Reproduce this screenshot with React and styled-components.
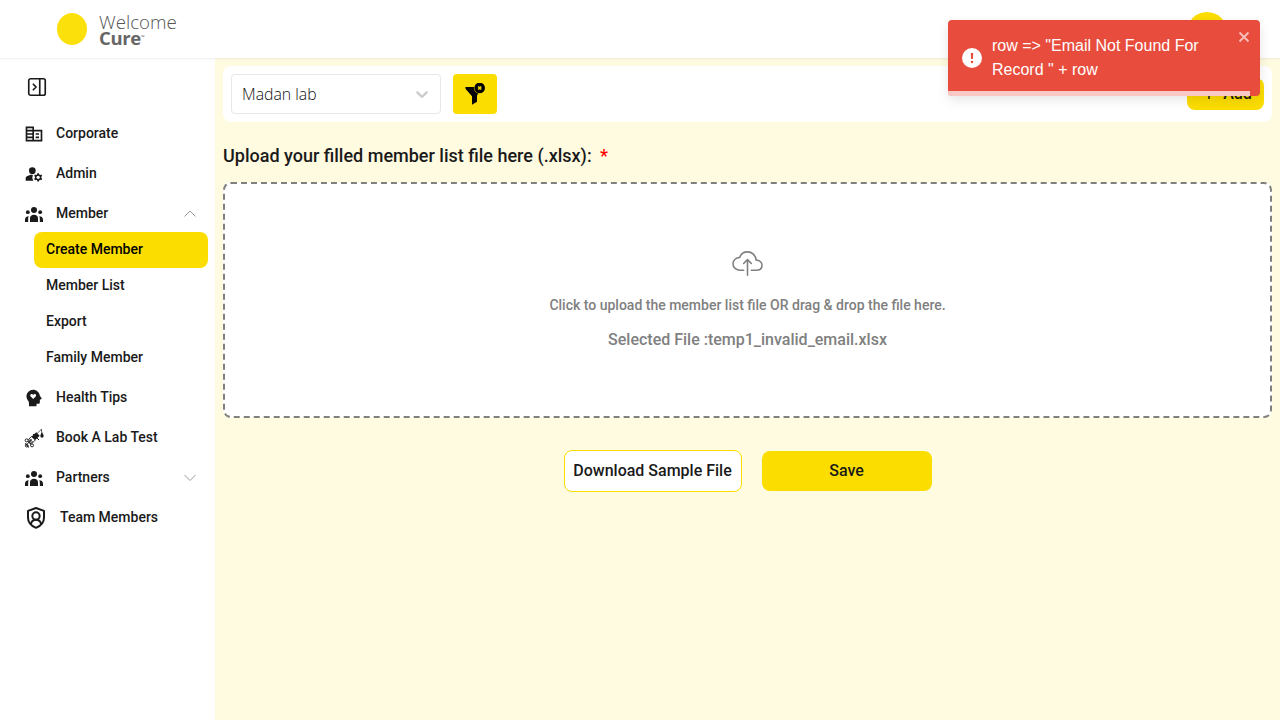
import React from "react";
import styled, { createGlobalStyle } from "styled-components";
import { PanelRightClose } from "lucide-react";
import { MdOutlineCorporateFare, MdManageAccounts } from "react-icons/md";
import { RiMentalHealthFill } from "react-icons/ri";
import { IoCloudUploadOutline } from "react-icons/io5";

const yellow = "#fbdd00";

const GlobalStyle = createGlobalStyle`
  * { box-sizing: border-box; }
  body { margin: 0; background: #fff; color: #1a1a1a; font-family: Roboto, sans-serif; font-weight: 500; }
  button { font: inherit; color: inherit; border: 0; padding: 0; cursor: pointer; }
  svg { display: block; flex: none; }
`;

const Page = styled.div`
  height: 720px;
  display: flex;
  flex-direction: column;
  overflow: hidden;
`;

const Header = styled.header`
  height: 58px;
  flex: none;
  display: flex;
  justify-content: space-between;
  align-items: flex-start;
  padding: 12px 53px 0 57px;
  box-shadow: 0 1px 2px rgba(0, 0, 0, 0.07);
  z-index: 1;
`;

const Logo = styled.div`
  display: flex;
  gap: 12px;
  padding-top: 1px;
`;

const LogoDot = styled.div`
  width: 30px;
  height: 32px;
  border-radius: 50%;
  background: #fbe00c;
`;

const LogoText = styled.div`
  display: flex;
  flex-direction: column;
  font-family: "Open Sans", sans-serif;
  font-size: 18.7px;
  line-height: 17px;
  font-weight: 320;
  color: #555;
`;

const LogoBold = styled.strong`
  display: flex;
  margin-top: -1px;
  font-size: 18.5px;
  font-weight: 700;
  color: #666;
  letter-spacing: -0.4px;
`;

const TradeMark = styled.small`
  font-size: 5px;
  line-height: 16px;
  font-weight: 400;
  letter-spacing: 0;
`;

const Avatar = styled.div`
  width: 40px;
  height: 40px;
  border-radius: 50%;
  background: ${yellow};
`;

const Body = styled.div`
  flex: 1;
  display: flex;
  min-height: 0;
`;

const Sidebar = styled.nav`
  width: 215px;
  flex: none;
  background: #fff;
  font-size: 14px;
`;

const Toggle = styled.div`
  height: 55px;
  padding: 18px 0 0 26px;
`;

const Item = styled.div`
  height: 40px;
  display: flex;
  align-items: center;
  padding: 0 18px 0 24px;
`;

const IconSlot = styled.span`
  width: ${(p) => (p.$wide ? 36 : 32)}px;
  display: flex;
  padding: ${(p) => p.$pad || "1px 0 0"};
`;

const Label = styled.span`
  flex: 1;
`;

const SubList = styled.div`
  margin: -1px 7px 1px 34px;
`;

const SubItem = styled.div`
  height: 36px;
  line-height: 34px;
  padding-left: 12px;
  border-radius: 8px;
  color: ${(p) => (p.$active ? "#000" : "inherit")};
  background: ${(p) => (p.$active ? yellow : "transparent")};
`;

const Main = styled.main`
  flex: 1;
  background: #fffbe1;
  padding: 8px;
`;

const Toolbar = styled.div`
  height: 56px;
  display: flex;
  align-items: center;
  padding: 8px;
  gap: 12px;
  background: #fff;
  border-radius: 8px;
`;

const Select = styled.div`
  width: 210px;
  height: 40px;
  display: flex;
  align-items: center;
  justify-content: space-between;
  padding: 0 8px 0 10px;
  border: 1px solid #e8e8e8;
  border-radius: 4px;
  color: #111;
  font-family: "Open Sans", sans-serif;
  font-size: 15.8px;
  font-weight: 360;
`;

const FilterButton = styled.button`
  width: 44px;
  height: 40px;
  display: flex;
  justify-content: center;
  align-items: center;
  border-radius: 4px;
  background: ${yellow};
`;

const AddButton = styled.button`
  width: 77px;
  height: 32px;
  margin-left: auto;
  display: flex;
  align-items: center;
  justify-content: center;
  gap: 8px;
  padding: 0 0 2px 4px;
  border-radius: 8px;
  background: ${yellow};
  font-size: 16px;
`;

const Heading = styled.h1`
  margin: 22px 0 14px;
  font-size: 18px;
  line-height: 24px;
  font-weight: 500;
  span { color: #f00; margin-left: 4px; }
`;

const DropZone = styled.div`
  height: 236px;
  display: flex;
  flex-direction: column;
  align-items: center;
  padding-top: 64px;
  border: 2px dashed #808080;
  border-radius: 8px;
  background: #fff;
  color: #808080;
  path, polyline, line { stroke-width: 26px; }
`;

const DropHint = styled.p`
  margin: 16px 0 0;
  font-size: 14px;
  line-height: 20px;
`;

const FileName = styled.p`
  margin: 15px 0 0;
  font-size: 16px;
  line-height: 20px;
`;

const Actions = styled.div`
  display: flex;
  justify-content: center;
  align-items: center;
  gap: 20px;
  margin-top: 32px;
  font-size: 16px;
`;

const ActionButton = styled.button`
  width: ${(p) => (p.$outline ? 178 : 170)}px;
  height: ${(p) => (p.$outline ? 42 : 40)}px;
  padding-bottom: 2px;
  border-radius: 8px;
  border: ${(p) => (p.$outline ? `1px solid ${yellow}` : "0")};
  background: ${(p) => (p.$outline ? "#fff" : yellow)};
`;

const ToastFrame = styled.div`
  position: absolute;
  top: 20px;
  left: 948px;
  z-index: 2;
  width: 312px;
  height: 76px;
  border-radius: 4px;
  box-shadow: 0 4px 12px rgba(0, 0, 0, 0.1);
`;

const Toast = styled.div`
  height: 100%;
  position: relative;
  overflow: hidden;
  display: flex;
  gap: 10px;
  padding: 14px 10px 0 14px;
  border-radius: 4px;
  background: #e74c3c;
  color: #fff;
  font: 400 16px/24px "Liberation Sans", Arial, sans-serif;
  > svg:first-child { margin-top: 14px; }
`;

const ToastText = styled.div`
  width: 236px;
`;

const ToastProgress = styled.div`
  position: absolute;
  left: 0;
  bottom: 0;
  width: 302px;
  height: 5px;
  background: rgba(255, 255, 255, 0.7);
`;

const PeopleIcon = () => (
  <svg width="18" height="15.4" viewBox="0 0 54 46" fill="currentColor">
    <circle cx="27" cy="9" r="9" />
    <circle cx="8.500" cy="15.500" r="5.700" />
    <circle cx="45.500" cy="15.500" r="5.700" />
    <path d="M15 46V34c0-7 5-11 12-11s12 4 12 11v12zM0 46v-8c0-6 4-10 11-10-1 3-1.500 5-1.500 9v9zM54 46v-8c0-6-4-10-11-10 1 3 1.500 5 1.500 9v9z" />
  </svg>
);

const SyringeIcon = () => (
  <svg width="20" height="20" viewBox="0 0 60 60" fill="none" stroke="currentColor" strokeWidth="2.8">
    <path d="M39 17L53 3M52 3l2 17" strokeWidth="2" />
    <path d="M54 13c3 5 5 8 5 11a5 5 0 0 1-10 0c0-3 2-6 5-11z" fill="currentColor" stroke="none" />
    <path d="M37 13l10 10-14 14-11-11z" fill="currentColor" stroke="none" />
    <path d="M27 18l18 18" strokeWidth="3" />
    <path d="M23 25L13 35l11 11 10-10M17 33l9 9M23 34L9 49" />
    <circle cx="8" cy="37" r="4.500" />
    <circle cx="24" cy="52" r="4.500" />
    <path d="M12 40l10 9M4 46l10 12" strokeWidth="3.500" />
    <circle cx="8" cy="53" r="4" />
  </svg>
);

const ShieldIcon = () => (
  <svg width="20" height="24" viewBox="0 0 60 72" fill="none" stroke="currentColor" strokeWidth="6">
    <path d="M30 6L54 14.500v20c0 15-9 25-24 31C15 59.500 6 49.500 6 34.500v-20z" strokeLinejoin="round" />
    <circle cx="30" cy="30" r="11" />
    <path d="M14.500 54c2-9 8-13 15.500-13s13.500 4 15.500 13" />
  </svg>
);

const FilterClearIcon = () => (
  <svg width="20" height="22" viewBox="0 0 60 66">
    <path d="M1 12h27c1 9 5 14 12 18l-4 8v18L21 65V40L2 18z" fill="#000" />
    <circle cx="44" cy="15" r="17.500" fill={yellow} />
    <circle cx="44" cy="15" r="16" fill="#000" />
    <path d="M39.500 10.500l9 9M48.500 10.500l-9 9" stroke={yellow} strokeWidth="5" />
  </svg>
);

const Chevron = ({ up }) => (
  <svg width="14" height="14" viewBox="0 0 14 14" fill="none" stroke="#999" strokeWidth="1">
    <path d={up ? "M1.500 10.500L7 5l5.500 5.500" : "M1.500 5L7 10.500 12.500 5"} />
  </svg>
);

const SelectArrow = () => (
  <svg width="20" height="20" viewBox="0 0 20 20" fill="#ccc">
    <path d="M4.516 7.548c0.436-0.446 1.043-0.481 1.576 0l3.908 3.747 3.908-3.747c0.533-0.481 1.141-0.446 1.574 0 0.436 0.445 0.408 1.197 0 1.615-0.406 0.418-4.695 4.502-4.695 4.502-0.217 0.223-0.502 0.335-0.787 0.335s-0.570-0.112-0.789-0.335c0 0-4.287-4.084-4.695-4.502s-0.436-1.170 0-1.615z" />
  </svg>
);

const AlertIcon = () => (
  <svg width="20" height="20" viewBox="0 0 20 20">
    <circle cx="10" cy="10" r="10" fill="#fff" />
    <path d="M8.800 5h2.400l-.3 6H9.100z" fill="#e74c3c" />
    <circle cx="10" cy="14" r="1.250" fill="#e74c3c" />
  </svg>
);

const CloseIcon = () => (
  <svg width="12" height="12" viewBox="0 0 12 12" stroke="#f5bdb7" strokeWidth="1.900">
    <path d="M1.500 1.500l9 9M10.500 1.500l-9 9" />
  </svg>
);

const CloseSlot = styled.span`
  margin: -3.5px 0 0 auto;
`;

const subItems = ["Create Member", "Member List", "Export", "Family Member"];

export default function App() {
  return (
    <Page>
      <GlobalStyle />
      <Header>
        <Logo>
          <LogoDot />
          <LogoText>
            <span>Welcome</span>
            <LogoBold>Cure<TradeMark>™</TradeMark></LogoBold>
          </LogoText>
        </Logo>
        <Avatar />
      </Header>
      <Body>
        <Sidebar>
          <Toggle><PanelRightClose size={22} strokeWidth={1.8} /></Toggle>
          <Item><IconSlot><MdOutlineCorporateFare size={20} /></IconSlot><Label>Corporate</Label></Item>
          <Item><IconSlot $pad="2px 0 0"><MdManageAccounts size={20} /></IconSlot><Label>Admin</Label></Item>
          <Item><IconSlot $pad="3px 0 0 1px"><PeopleIcon /></IconSlot><Label>Member</Label><Chevron up /></Item>
          <SubList>
            {subItems.map((name, i) => <SubItem key={name} $active={i === 0}>{name}</SubItem>)}
          </SubList>
          <Item><IconSlot><RiMentalHealthFill size={20} /></IconSlot><Label>Health Tips</Label></Item>
          <Item><IconSlot><SyringeIcon /></IconSlot><Label>Book A Lab Test</Label></Item>
          <Item><IconSlot $pad="3px 0 0 1px"><PeopleIcon /></IconSlot><Label>Partners</Label><Chevron /></Item>
          <Item><IconSlot $wide $pad="2px 0 0 2px"><ShieldIcon /></IconSlot><Label>Team Members</Label></Item>
        </Sidebar>
        <Main>
          <Toolbar>
            <Select>Madan lab<SelectArrow /></Select>
            <FilterButton><FilterClearIcon /></FilterButton>
            <AddButton>
              <svg width="12" height="12" viewBox="0 0 12 12" stroke="currentColor" strokeWidth="1.500"><path d="M6 0v12M0 6h12" /></svg>
              Add
            </AddButton>
          </Toolbar>
          <Heading>Upload your filled member list file here (.xlsx): <span>*</span></Heading>
          <DropZone>
            <IoCloudUploadOutline size={31} />
            <DropHint>Click to upload the member list file OR drag &amp; drop the file here.</DropHint>
            <FileName>Selected File :temp1_invalid_email.xlsx</FileName>
          </DropZone>
          <Actions>
            <ActionButton $outline>Download Sample File</ActionButton>
            <ActionButton>Save</ActionButton>
          </Actions>
        </Main>
      </Body>
      <ToastFrame>
        <Toast>
          <AlertIcon />
          <ToastText>row =&gt; "Email Not Found For Record " + row</ToastText>
          <CloseSlot><CloseIcon /></CloseSlot>
          <ToastProgress />
        </Toast>
      </ToastFrame>
    </Page>
  );
}
